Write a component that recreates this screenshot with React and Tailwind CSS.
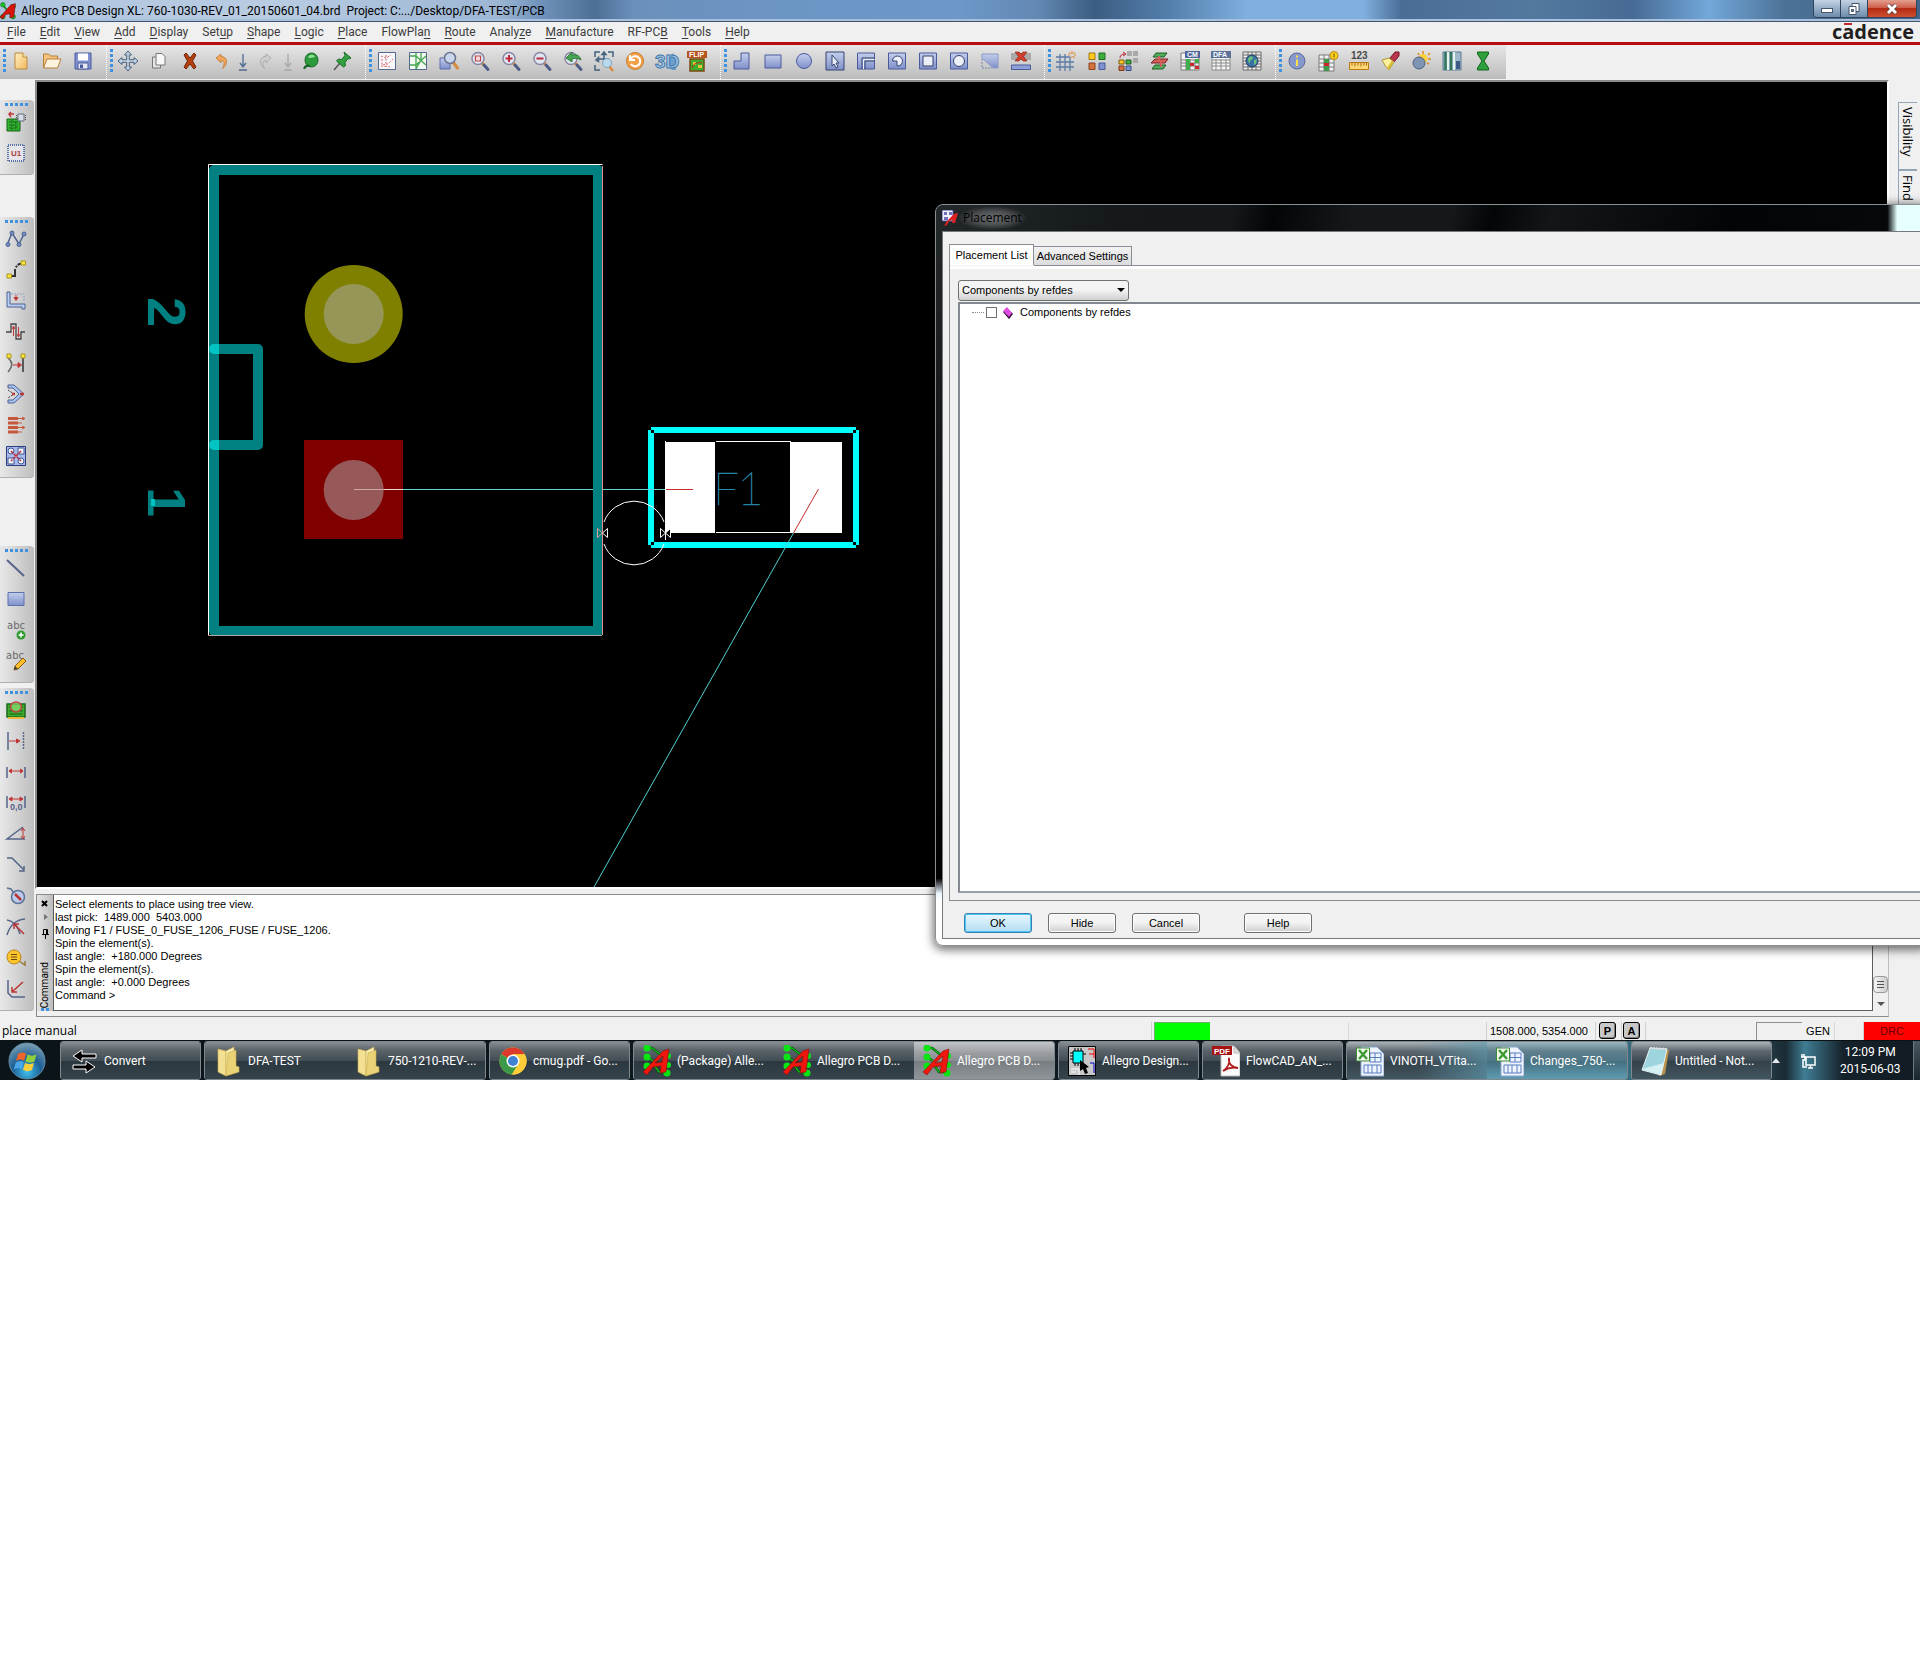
const magnifier = (inner) => (
  <>
    <path d="M12 12l2.5 2.5" stroke="#d98a3c" strokeWidth="3" />
    <path d="M14 14l4 4.5" stroke="#4d5c86" strokeWidth="3" strokeLinecap="round" />
    <circle cx="8" cy="7.5" r="6" fill="#dfe7f3" stroke="#8b86a0" strokeWidth="1.5" />
    {inner}
  </>
);

const ICONS = {
  newFile: (
    <>
      <path d="M4 2h8l4 4v12H4z" fill="url(#gold)" stroke="#b98a3c" />
      <path d="M12 2v4h4" fill="#fff3c9" stroke="#b98a3c" />
    </>
  ),
  open: (
    <>
      <path d="M1.5 16V3h5l2 2h7v4" fill="#f3c47c" stroke="#b9803c" />
      <path d="M1.5 17L5 8h14l-3.5 9z" fill="#fdf3df" stroke="#b9803c" />
    </>
  ),
  save: (
    <>
      <path d="M2 2h16v16H2z" fill="#7f8fcf" stroke="#4a5a9c" />
      <path d="M5 2.5h10v7H5z" fill="#fff" />
      <path d="M5 12h10v6H5z" fill="#e6e9f2" stroke="#4a5a9c" />
      <path d="M7 13.5h3V17H7z" fill="#4a5a9c" />
    </>
  ),
  move: (
    <path
      d="M10 0l3.5 4h-2.2v4.7H16V6.5l4 3.5-4 3.5v-2.2h-4.7V16h2.2L10 20l-3.5-4h2.2v-4.7H4v2.2L0 10l4-3.500v2.200h4.700V4H6.500z"
      fill="#c3d2e0"
      stroke="#46617f"
    />
  ),
  copy: (
    <>
      <path d="M3.5 6h8v11h-8z" fill="#e4e4e4" stroke="#777" />
      <path d="M7 2.5h6l3 3V14H7z" fill="#f7f7f7" stroke="#777" />
    </>
  ),
  remove: (
    <path
      d="M4 4l2-2 4 5 4-5 2 2-3.5 6 3.5 6-2 2-4-5-4 5-2-2 3.5-6z"
      fill="#b5400f"
      stroke="#6e2206"
    />
  ),
  undo: (
    <path d="M5 7l5-4v2.5c7 0 7 8.500 1.500 12 2.500-5 2-8-1.500-8V12z" fill="#f0a45c" stroke="#c07830" strokeWidth=".8" />
  ),
  redo: (
    <path d="M15 7l-5-4v2.5c-7 0-7 8.500-1.500 12-2.500-5-2-8 1.500-8V12z" fill="#cfcfcf" stroke="#a3a3a3" strokeWidth=".8" />
  ),
  globe: (
    <>
      <ellipse cx="10.5" cy="9" rx="6.5" ry="7" fill="#2f9a3d" stroke="#176a25" />
      <path d="M7 6c2-3 6-3 7 0-3 0-5 2-7 0z" fill="#93e09a" />
      <path d="M3 18c1-3 3-4 6-3" fill="none" stroke="#176a25" strokeWidth="2" />
    </>
  ),
  pin: (
    <>
      <path d="M8 12l-6 7" stroke="#555" strokeWidth="1.5" />
      <path d="M12 1l7 6-2 1-1-.5-3 4 .5 3-2 1.5-7-6 2-2 3 .5 3.500-4z" fill="#35a040" stroke="#186c26" />
    </>
  ),
  ratsRed: (
    <>
      <path d="M1.5 1.5h17v17h-17z" fill="#f7f7fb" stroke="#55688f" />
      <path d="M4 5l5 2 5-3M5 8v6l6-1 5-5M9 4v12M4 15l10 1" fill="none" stroke="#d46a6a" strokeDasharray="2 1.5" />
    </>
  ),
  ratsGreen: (
    <>
      <path d="M1.5 1.5h17v17h-17z" fill="#f2faf2" stroke="#55688f" />
      <path d="M2 5h6l10 9M2 14h6l10-9M8 2v16M13 2v7l-5 9" fill="none" stroke="#47a552" strokeWidth="1.3" />
    </>
  ),
  zoomArea: (
    <>
      <path d="M1 7h10v11H1z" fill="url(#steel)" stroke="#5c6fae" />
      <path d="M14 11l4.5 6" stroke="#d98a3c" strokeWidth="3" strokeLinecap="round" />
      <circle cx="11" cy="7" r="5.5" fill="#c9d6ec" stroke="#6c7391" strokeWidth="1.5" />
    </>
  ),
  zoomBox: magnifier(<path d="M5.5 5h5v5h-5z" fill="#f6dede" stroke="#c04646" strokeWidth="1.2" />),
  zoomIn: magnifier(<path d="M8 4v7M4.5 7.5h7" stroke="#c0283c" strokeWidth="2" />),
  zoomOut: magnifier(<path d="M4.5 7.5h7" stroke="#c0283c" strokeWidth="2" />),
  zoomPrev: magnifier(
    <path d="M3 7l6-6v3c5-1 8 1 9 5-3-2-6-2-9-1v3z" fill="#47a552" stroke="#1c6c28" strokeWidth=".8" />
  ),
  zoomFit: (
    <>
      <path
        d="M1 6V1h5M14 1h5v5M1 14v5h5M10 3v10M5 8h10M10 1l-2 2.5h4zM2 9l2.5-2.5v4z"
        fill="none"
        stroke="#41617f"
        strokeWidth="1.5"
      />
      <path d="M15 15l4 5" stroke="#d98a3c" strokeWidth="2.5" />
      <circle cx="13" cy="12" r="4.5" fill="#b9d9ee" stroke="#7fa3bd" />
    </>
  ),
  refresh: (
    <>
      <circle cx="10" cy="10" r="8.5" fill="#f4a24a" stroke="#c77a26" />
      <path d="M6 7.5A5 5 0 1 1 6 13M5 4v5h5" fill="none" stroke="#fff" strokeWidth="2" />
    </>
  ),
  threeD: (
    <>
      <path d="M10 14l6 5h4V6l-3-4z" fill="#6d9fcb" />
      <text x="-1" y="17" fontSize="19" fontWeight="700" fill="#a5c8e6" stroke="#3f76a8" strokeWidth="1" fontFamily="Liberation Sans">
        3D
      </text>
    </>
  ),
  flip: (
    <>
      <path d="M3 8h14v12H3z" fill="#3fae2c" stroke="#7a4a10" strokeWidth="1.5" />
      <path d="M6 11h3v3H6zM11 14h4v3h-4z" fill="#e6c23a" />
      <path d="M5 17c2-5 6-6 10-5" stroke="#b02a1a" fill="none" />
      <path d="M0 0h20v7H0z" fill="#b5541c" />
      <text x="2" y="6" fontSize="7" fontWeight="700" fill="#fff" fontFamily="Liberation Sans">
        FLIP
      </text>
    </>
  ),
  polygon: <path d="M2 10h7V2h8v16H2z" fill="url(#steel)" stroke="#4a5a9c" />,
  rect: <path d="M2 4h16v13H2z" fill="url(#steel)" stroke="#4a5a9c" />,
  circle: <circle cx="10" cy="10" r="7.5" fill="url(#steel)" stroke="#4a5a9c" />,
  select: (
    <>
      <path d="M1 1h18v18H1z" fill="url(#steel)" stroke="#33446f" />
      <path d="M7 4l7 8h-3l2 4-2 1-2-4-2 2z" fill="#e9edf8" stroke="#33446f" />
    </>
  ),
  shapeL: (
    <>
      <path d="M1.5 2h17v16h-17z" fill="url(#steel)" stroke="#4a5a9c" />
      <path d="M6 18V7h12.5M9 18v-8h9.5" fill="none" stroke="#33446f" />
      <path d="M7.5 18V8.5h11" fill="none" stroke="#eef1fa" />
    </>
  ),
  shapeCut: (
    <>
      <path d="M1.5 2h17v16h-17z" fill="url(#steel)" stroke="#4a5a9c" />
      <path d="M10 15V10H5.5A5 5 0 1 1 10 15z" fill="#eef1fa" stroke="#33446f" />
    </>
  ),
  shapeSquare: (
    <>
      <path d="M1.5 2h17v16h-17z" fill="url(#steel)" stroke="#4a5a9c" />
      <path d="M5 5h10v10H5z" fill="#eceff5" stroke="#33446f" />
    </>
  ),
  shapeRound: (
    <>
      <path d="M1.5 2h17v16h-17z" fill="url(#steel)" stroke="#4a5a9c" />
      <circle cx="10" cy="10" r="5.5" fill="#eceff5" stroke="#33446f" />
    </>
  ),
  shapeCorner: (
    <>
      <path d="M2 3h16v14h-5L2 7z" fill="url(#steel)" stroke="#8c9ac6" />
      <path d="M2 8v9h10" fill="none" stroke="#7583ad" strokeDasharray="2 1" />
    </>
  ),
  islandDelete: (
    <>
      <path d="M0 2h20v7H0z" fill="#a9a9a9" />
      <path d="M4 1h4l2 2 2-2h4l-3.5 4.5L16 10h-4l-2-2-2 2H4l3.5-4.5z" fill="#d0402c" stroke="#8a1e10" strokeWidth=".6" />
      <path d="M.5 14h19v4.5H.5z" fill="#8f9fd8" stroke="#4a5a9c" />
    </>
  ),
  grid: (
    <>
      <path d="M4 3v17M9 3v17M14 6v14M0 6h14M0 11h18M0 16h18" stroke="#5d7ba6" strokeWidth="1.3" />
      <path d="M16 0v3M16 5v2M12 4h2M18 4h2M13 1l2 2M19 1l-2 2M19 7l-2-2" stroke="#d9862a" />
    </>
  ),
  swatches: (
    <>
      <path d="M2 2h6v6.5H2z" fill="#ffc81e" stroke="#a07a10" />
      <path d="M12 2h6v6.5h-6z" fill="#3fae3c" stroke="#1f6e22" />
      <path d="M2 12h6v6.5H2z" fill="#d4713c" stroke="#8a4420" />
      <path d="M12 12h6v6.5h-6z" fill="#7f92cf" stroke="#475a96" />
    </>
  ),
  swatchMove: (
    <>
      <path d="M9 0h5v5H9zM15 0h5v5h-5zM15 7h5v5h-5z" fill="#a9a9a9" />
      <path d="M1 9h5v4H1z" fill="#ffc81e" stroke="#7a5a10" />
      <path d="M8 9h5v4H8z" fill="#3fae3c" stroke="#1f5e22" />
      <path d="M1 15h5v4.5H1z" fill="#d4713c" stroke="#7a3a20" />
      <path d="M8 15h5v4.5H8z" fill="#7f92cf" stroke="#374a86" />
      <path d="M2 7c0-3 2-4 5-4M5 1l3 2-3 2" fill="none" stroke="#c0283c" />
    </>
  ),
  layers: (
    <>
      <path d="M6 14h11l-3 4H3z" fill="#4fae5c" stroke="#1f5e22" />
      <path d="M6 8h13l-3 4H2z" fill="#d4605c" stroke="#7a1f22" />
      <path d="M7 2h11l-3 4H4z" fill="#4fae5c" stroke="#1f5e22" />
      <path d="M10 5v4M12 11v5" stroke="#d4605c" strokeWidth="2" />
    </>
  ),
  cm: (
    <>
      <path d="M1 2h18v17H1z" fill="#f2f2f2" stroke="#7a7a7a" />
      <path d="M1 9h18M1 12h18M1 15h18M6 8v11M10 8v11M15 8v11" stroke="#7a7a7a" />
      <path d="M6 8h4v11H6zM15 8h4v4h-4z" fill="#3fae4c" />
      <path d="M10 12h4v3h-4zM15 15h4v3h-4z" fill="#c8282c" />
      <path d="M5 0h15v7H5z" fill="#4f679c" />
      <text x="7" y="6" fontSize="7" fontWeight="700" fill="#fff" fontFamily="Liberation Sans">
        CM
      </text>
    </>
  ),
  dfa: (
    <>
      <path d="M1 2h18v17H1z" fill="#f4f4f4" stroke="#8a8a8a" />
      <path d="M1 9h18M1 12h18M1 15h18M5 8v11M10 8v11M15 8v11" stroke="#8a8a8a" />
      <path d="M0 0h20v7H0z" fill="#5c7199" />
      <text x="2" y="6" fontSize="7" fontWeight="700" fill="#fff" fontFamily="Liberation Sans">
        DFA
      </text>
    </>
  ),
  sheetGlobe: (
    <>
      <path d="M1 1h18v18H1z" fill="#ececec" stroke="#6a6a6a" />
      <path d="M1 4h18M1 7h18M1 10h18M1 13h18M1 16h18M6 1v18M10 1v18M14 1v18" stroke="#6a6a6a" />
      <circle cx="10" cy="10" r="6" fill="#3c6fa6" stroke="#1d3d66" />
      <path d="M6 8c2-4 5-3 5-1s-3 1-3 4-2 0-2-3zM12 9l3-1-1 5-2 1z" fill="#67c27a" />
    </>
  ),
  info: (
    <>
      <circle cx="10" cy="10" r="8" fill="#8798cc" stroke="#5a6a9a" />
      <path d="M10 8.5V15M10 4.5v2" stroke="#ffe24a" strokeWidth="2" />
    </>
  ),
  sheetInfo: (
    <>
      <path d="M1 4h15v16H1z" fill="#f2f2f2" stroke="#7a7a7a" />
      <path d="M1 8h15M1 12h15M1 16h15M6 4v16M11 4v16" stroke="#7a7a7a" />
      <path d="M6 8h5v12H6z" fill="#3f9a4c" />
      <path d="M6 12h5v3H6z" fill="#c8282c" />
      <circle cx="16" cy="4.5" r="4" fill="#ffd21e" stroke="#b98a10" />
      <path d="M16 2.5v4" stroke="#6a4a00" />
    </>
  ),
  ruler: (
    <>
      <text x="2" y="8" fontSize="10" fontWeight="700" fill="#4a4a4a" fontFamily="Liberation Sans">
        123
      </text>
      <path d="M.5 11.5h19v7H.5z" fill="#ffd676" stroke="#b97a10" />
      <path d="M3 11.5v3M6 11.5v4M9 11.5v3M12 11.5v4M15 11.5v3M17.5 11.5v3" stroke="#a8680c" />
    </>
  ),
  brush: (
    <>
      <path d="M10 7l5-6 4 0v4l-5 6z" fill="#b8344c" stroke="#7a1a2c" />
      <path d="M2 9l7-2 5 4-5 8-3-3z" fill="#fff09c" stroke="#a8983c" />
      <path d="M9 19l5-8-2-1.5L7 17z" fill="#d6b83c" />
    </>
  ),
  shadow: (
    <>
      <path d="M12 0v3M19 2l-2 2M20 8h-3M18 13l-2-1M7 2l1 2" stroke="#e08a1a" strokeWidth="1.5" />
      <circle cx="12" cy="7.5" r="4.5" fill="#ffd03c" />
      <circle cx="8" cy="12" r="6" fill="#7f93b3" stroke="#4c5f80" />
    </>
  ),
  bars: (
    <>
      <path d="M1 1h18v18H1z" fill="#9fb8cc" stroke="#5a7a94" />
      <path d="M3.5 1v18M9 1v18" stroke="#35775c" strokeWidth="2.5" />
      <path d="M6 1v18M12 1v18" stroke="#e6f4ee" strokeWidth="2" />
      <path d="M14 10h4v8h-4z" fill="#3d5a85" />
    </>
  ),
  hourglass: <path d="M4.5 1h11v2L11 10l4.5 7v2h-11v-2L9 10 4.5 3z" fill="#2fa03c" stroke="#12641d" />,
  place: (
    <>
      <path d="M1 7h13v12H1z" fill="#35b52f" stroke="#14651a" />
      <path d="M3 10h9M3 13h9M3 16h9M6 8v10M10 9v9" stroke="#14651a" strokeDasharray="3 1" />
      <path d="M8 2H3M5 0L3 2l2 3" fill="none" stroke="#c03838" strokeWidth="1.5" />
      <path d="M12 2h6v7h-6z" fill="#d8dee8" stroke="#636f80" />
      <path d="M10.5 3v5M19.5 3v5" stroke="#555" strokeDasharray="1 1" />
    </>
  ),
  u1: (
    <>
      <path d="M2 2h16v16H2z" fill="#e6e6ea" stroke="#5a73a6" strokeWidth="2" strokeDasharray="1 1" />
      <text x="5" y="13" fontSize="8" fontWeight="700" fill="#a83a3a" fontFamily="Liberation Sans">
        U1
      </text>
    </>
  ),
  route: (
    <>
      <path d="M1.5 15L6 4l7 11 5-10" fill="none" stroke="#4d6391" strokeWidth="1.5" />
      <g fill="#7590c8" stroke="#4d6391">
        <circle cx="2" cy="15.5" r="2" />
        <circle cx="6" cy="4" r="2" />
        <circle cx="13" cy="15.5" r="2" />
        <circle cx="18" cy="5" r="2" />
      </g>
    </>
  ),
  elbow: (
    <>
      <path d="M4 16h5V8l4-4h4" fill="none" stroke="#333" strokeWidth="2" strokeDasharray="12 2 2 1" />
      <path d="M1 14h4.5v4H1zM15 1h4.5v4H15z" fill="#ffe63c" stroke="#a8941c" />
    </>
  ),
  slide: (
    <>
      <path d="M1 1h3v12h15v5h-3v-2H1z" fill="#b9cdf0" stroke="#4d6391" />
      <path d="M5 3h13v8" fill="none" stroke="#8fa3c8" strokeDasharray="2 1" />
      <path d="M10 4v4M8 6.5l2 3 2-3z" fill="#c03838" stroke="#c03838" />
    </>
  ),
  delay: (
    <>
      <path d="M0 10h5V2h5v15h5v-7h4" fill="none" stroke="#444" strokeWidth="1.3" />
      <path d="M7.5 14V5M6 7l1.5-3L9 7M12.5 5v9M11 12l1.5 3 1.5-3" fill="none" stroke="#c03838" />
    </>
  ),
  spread: (
    <>
      <path d="M2 5c5 4 5 8 0 14" fill="none" stroke="#666" strokeWidth="1.5" />
      <path d="M17 5v14" stroke="#333" strokeWidth="1.5" />
      <path d="M7 12h7M12 9.5l3.5 2.5-3.5 2.5z" fill="#c03838" stroke="#c03838" />
      <path d="M1 1h4v4H1zM15 1h4v4h-4z" fill="#ffe63c" stroke="#a8941c" />
    </>
  ),
  miter: (
    <>
      <path d="M2 1h6l10 9-10 9H2v-3h5l6-6-6-6H2z" fill="#a9c1ee" stroke="#4d6391" />
      <path d="M2 6l6 4-6 4" fill="none" stroke="#444" strokeDasharray="2 1" />
      <path d="M6 10h3M14 10h4" stroke="#c03838" strokeWidth="2.5" />
    </>
  ),
  fanout: (
    <>
      <path d="M2 2h10v3H2zM2 6.5h10v3H2zM2 11h10v3H2zM2 15.5h10v3H2z" fill="#c5583c" />
      <path d="M12 3.5h6M12 8h4M12 12.5h6M12 17h4M16 2l3 1.5L16 5M16 11l3 1.5-3 1.5" fill="none" stroke="#c5583c" />
    </>
  ),
  autoRoute: (
    <>
      <path d="M.5.5h19v19H.5z" fill="#a9bbea" stroke="#2d3f80" />
      <g fill="#f4f6fc" stroke="#3f5493">
        <circle cx="5" cy="5" r="3" />
        <circle cx="15" cy="15" r="3" />
        <path d="M12 2h6v6h-6zM2 12h6v6H2z" />
      </g>
      <path d="M5 5l10 10M15 5L5 15" stroke="#b82c3c" strokeWidth="1.5" strokeDasharray="3 1" />
    </>
  ),
  line: <path d="M1 2l17 16" stroke="#566589" strokeWidth="2" />,
  box: <path d="M2 3.5h16v13H2z" fill="url(#steel)" stroke="#5c6fae" />,
  textAdd: (
    <>
      <text x="1" y="9" fontSize="10" fill="#6a6a6a" fontFamily="DejaVu Sans">
        abc
      </text>
      <circle cx="15" cy="15" r="4.5" fill="#2f9a30" />
      <path d="M15 12.5v5M12.5 15h5" stroke="#fff" strokeWidth="1.5" />
    </>
  ),
  textEdit: (
    <>
      <text x="0" y="8" fontSize="10" fill="#6a6a6a" fontFamily="DejaVu Sans">
        abc
      </text>
      <path d="M8 19l1-4 8-8 3 3-8 8z" fill="#ffbe2c" stroke="#8a5a10" />
      <path d="M8 19l1-4 3 3z" fill="#444" />
    </>
  ),
  board: (
    <>
      <path d="M1 4h18v13H1z" fill="#3fae30" stroke="#1a6a1c" strokeWidth="1.5" />
      <path d="M3 7h3M3 11h14M3 14h14M14 7h3" stroke="#15651a" />
      <path d="M2 18h16" stroke="#e6b93a" strokeWidth="2" />
      <ellipse cx="10" cy="7" rx="5.5" ry="5" fill="#9be07a" fillOpacity=".6" stroke="#c04040" strokeWidth="1.5" />
    </>
  ),
  dimLinear: (
    <>
      <path d="M2 1v18" stroke="#566589" strokeWidth="1.5" />
      <path d="M17.5 1v18" stroke="#566589" strokeWidth="1.5" strokeDasharray="2 1" />
      <path d="M3 10h10M10.5 8l3.5 2-3.5 2z" fill="#c03838" stroke="#c03838" />
    </>
  ),
  dimSpan: (
    <>
      <path d="M1 5v11M19 5v11" stroke="#566589" strokeWidth="1.5" />
      <path d="M3 9h14M5.5 7L3 9l2.5 2zM14.500 7L17 9l-2.500 2z" fill="#c03838" stroke="#c03838" />
    </>
  ),
  dimDatum: (
    <>
      <path d="M1 3v12M19 3v12" stroke="#566589" strokeWidth="1.5" />
      <path d="M3 6h14M6 4L3 6l3 2zM14 4l3 2-3 2z" fill="#c03838" stroke="#c03838" />
      <text x="4" y="17" fontSize="9" fontWeight="700" fill="#566589" fontFamily="Liberation Sans">
        0,0
      </text>
    </>
  ),
  angle: (
    <>
      <path d="M19 15H1L17 3" fill="none" stroke="#566589" strokeWidth="1.5" />
      <path d="M17 5v9M15 7l2-3 2 3M15 12l2 3 2-3" fill="none" stroke="#c03838" />
    </>
  ),
  leader: <path d="M1 3h5l12 12M18 11v5h-5" fill="none" stroke="#566589" strokeWidth="1.5" />,
  diameter: (
    <>
      <circle cx="12" cy="11" r="6.5" fill="#bccbea" stroke="#5c7199" strokeWidth="1.5" />
      <path d="M1 2l4 1 3 4" fill="none" stroke="#5c7199" strokeWidth="1.5" />
      <path d="M9 8l6 6" stroke="#b83434" strokeWidth="2.5" />
    </>
  ),
  radius: (
    <>
      <path d="M1 3c7 1 11 7 13 14M1 18C4 8 9 3 19 2" fill="none" stroke="#566589" strokeWidth="1.5" />
      <path d="M18 17L9 8M8 12V7h5" fill="none" stroke="#b83434" strokeWidth="1.5" />
    </>
  ),
  balloon: (
    <>
      <path d="M13 13l6 4v-4" fill="none" stroke="#9a7a3c" strokeWidth="1.5" />
      <circle cx="8" cy="9" r="7" fill="#ffc62c" stroke="#b9831c" />
      <path d="M5 6.5h6M5 9h6M5 11.5h6" stroke="#6a4a10" />
    </>
  ),
  chamfer: (
    <>
      <path d="M2 1v13l4 4h13" fill="none" stroke="#566589" strokeWidth="1.5" />
      <path d="M17 3L7 12M6 8v5h5" fill="none" stroke="#b83434" strokeWidth="1.5" />
    </>
  ),
};

const TOP_TOOLS = [
  ["newFile", "open", "save"],
  ["move", "copy", "remove", "undo", "undoMark", "redo", "redoMark", "globe", "pin"],
  ["ratsRed", "ratsGreen", "zoomArea", "zoomBox", "zoomIn", "zoomOut", "zoomPrev", "zoomFit", "refresh", "threeD", "flip"],
  ["polygon", "rect", "circle", "select", "shapeL", "shapeCut", "shapeSquare", "shapeRound", "shapeCorner", "islandDelete"],
  ["grid", "swatches", "swatchMove", "layers", "cm", "dfa", "sheetGlobe"],
  ["info", "sheetInfo", "ruler", "brush", "shadow", "bars", "hourglass"],
];

const SIDE_TOOLS = [
  { gap: "mt-0", tools: ["place", "u1"] },
  { gap: "mt-[42px]", tools: ["route", "elbow", "slide", "delay", "spread", "miter", "fanout", "autoRoute"] },
  { gap: "mt-[68px]", tools: ["line", "box", "textAdd", "textEdit"] },
  {
    gap: "mt-[5px]",
    tools: ["board", "dimLinear", "dimSpan", "dimDatum", "angle", "leader", "diameter", "radius", "balloon", "chamfer"],
  },
];

// [text before the mnemonic, mnemonic, text after it]
const MENUS = [
  ["", "F", "ile"],
  ["", "E", "dit"],
  ["", "V", "iew"],
  ["", "A", "dd"],
  ["", "D", "isplay"],
  ["Set", "u", "p"],
  ["", "S", "hape"],
  ["", "L", "ogic"],
  ["", "P", "lace"],
  ["FlowPla", "n", ""],
  ["", "R", "oute"],
  ["Analy", "z", "e"],
  ["", "M", "anufacture"],
  ["RF-PC", "B", ""],
  ["", "T", "ools"],
  ["", "H", "elp"],
];

const LOG = [
  "Select elements to place using tree view.",
  "last pick:  1489.000  5403.000",
  "Moving F1 / FUSE_0_FUSE_1206_FUSE / FUSE_1206.",
  "Spin the element(s).",
  "last angle:  +180.000 Degrees",
  "Spin the element(s).",
  "last angle:  +0.000 Degrees",
  "Command >",
];

function Icon({ name }) {
  return (
    <svg viewBox="0 0 20 20" className="size-5 overflow-visible" aria-hidden="true">
      {ICONS[name]}
    </svg>
  );
}

function ToolButton({ name }) {
  if (name === "undoMark" || name === "redoMark") {
    const color = name === "undoMark" ? "#4f6a94" : "#a8a8a8";
    return (
      <button type="button" aria-label={name} className="flex h-[27px] w-[10px] items-center justify-center">
        <svg viewBox="0 0 10 20" className="h-5 w-[10px]" aria-hidden="true">
          <path d="M5 3v12M2 12l3 4 3-4M1 19h8" fill="none" stroke={color} strokeWidth="1.3" />
        </svg>
      </button>
    );
  }
  return (
    <button type="button" aria-label={name} className="flex size-[27px] items-center justify-center">
      <Icon name={name} />
    </button>
  );
}

function Logo() {
  return (
    <svg viewBox="0 0 28 32" className="h-8 w-7" aria-hidden="true">
      <path d="M4 3h5l9 7h7M4 12l6 4M3 21l8-1 5 7h8M14 20h11" fill="none" stroke="#0a5c10" strokeWidth="2.5" />
      <path d="M4 3h5l9 7h7M4 12l6 4M3 21l8-1 5 7h8M14 20h11" fill="none" stroke="#0be414" />
      <g fill="#0be414">
        <circle cx="4" cy="3" r="3.5" />
        <circle cx="4" cy="12" r="3.5" />
        <circle cx="4" cy="21" r="3.5" />
        <circle cx="25" cy="11" r="3" />
        <circle cx="25" cy="20" r="3" />
        <circle cx="24" cy="28" r="3.5" />
      </g>
      <path d="M0 27L20 6l6-2-3 23-6 1 1-7-8 1-6 8z M12 18l7-1 1-6z" fill="#f0180e" fillRule="evenodd" stroke="#7a0a06" strokeWidth=".5" />
    </svg>
  );
}

function TitleBar() {
  return (
    <header className="flex h-[22px] items-start border-b border-[#41546e] bg-[linear-gradient(to_right,#aec4de_0%,#b9cce2_14%,#9cb6d4_26%,#7395bd_28%,#4d6f95_31%,#6b90bb_33%,#6c95c4_40%,#6c97c8_50%,#6389b3_54%,#3c5d82_57%,#5480ad_61%,#7fb0df_65%,#7fb0df_71%,#4a6d96_73%,#54799f_80%,#466a93_85%,#72a8da_89%,#4c7196_93%,#41648a_100%)] shadow-[inset_0_-2px_0_#a9c0dc]">
      <svg viewBox="0 0 28 32" className="mt-[2px] h-[18px] w-4" preserveAspectRatio="none" aria-hidden="true">
        <path d="M4 4l16 20M4 24L24 6" stroke="#0d8a10" strokeWidth="3" />
        <g fill="#1fc427" stroke="#06600a">
          <circle cx="5" cy="5" r="4" />
          <circle cx="23" cy="8" r="4" />
          <circle cx="5" cy="26" r="4" />
          <circle cx="23" cy="26" r="4" />
        </g>
        <path d="M0 27L19 5l8-2-3 24-7 1 1-7-8 1-5 8z" fill="#d8150c" stroke="#6a0a06" />
      </svg>
      <h1 className="ml-[5px] whitespace-pre font-['Roboto',sans-serif] text-xs leading-[22px] text-black">
        Allegro PCB Design XL: 760-1030-REV_01_20150601_04.brd  Project: C:.../Desktop/DFA-TEST/PCB
      </h1>
      <div className="mr-[3px] ml-auto flex h-[18px] overflow-hidden rounded-b border border-t-0 border-[#31445c]">
        <button type="button" aria-label="Minimize" className="flex w-[27px] items-end justify-center border-r border-[#31445c] bg-linear-to-b from-[#c3d3e4] to-[#6e8bab] pb-1">
          <span className="h-[5px] w-3 border border-[#44546a] bg-white" />
        </button>
        <button type="button" aria-label="Restore" className="flex w-[27px] items-center justify-center border-r border-[#31445c] bg-linear-to-b from-[#c3d3e4] to-[#6e8bab]">
          <svg viewBox="0 0 14 14" className="size-[14px]" aria-hidden="true">
            <path d="M5 1.5h7v8H5z" fill="#fff" stroke="#44546a" />
            <path d="M2 4.5h7v8H2z" fill="#fff" stroke="#44546a" />
            <path d="M4.5 7.5h2v2h-2z" fill="#6e8bab" stroke="#44546a" />
          </svg>
        </button>
        <button type="button" aria-label="Close" className="flex w-[48px] items-center justify-center bg-[linear-gradient(#e3a08f,#cf5f49_45%,#b52a12_50%,#cf5030)]">
          <svg viewBox="0 0 14 12" className="h-3 w-[14px]" aria-hidden="true">
            <path d="M3 2l8 8M11 2l-8 8" stroke="#4d3a3a" strokeWidth="4.5" />
            <path d="M3 2l8 8M11 2l-8 8" stroke="#fff" strokeWidth="3" />
          </svg>
        </button>
      </div>
    </header>
  );
}

function MenuBar() {
  return (
    <nav className="flex h-5 items-center font-['Roboto',sans-serif] text-xs text-[#3c3c3c]">
      {MENUS.map(([before, key, after]) => (
        <button key={before + key + after} type="button" className="px-[7px] leading-5">
          {before}
          <span className="underline underline-offset-2">{key}</span>
          {after}
        </button>
      ))}
      <div className="relative mr-[6px] ml-auto font-['Open_Sans',sans-serif] text-xl leading-5 font-bold text-[#231f20]">
        cadence
        <span className="absolute top-px left-3 h-[2px] w-2 bg-[#c0282c]" />
      </div>
    </nav>
  );
}

function TopToolbar() {
  return (
    <div className="mb-px flex h-[34px] w-fit bg-linear-to-b from-[#e6e6e6] to-[#bcbcbc]" role="toolbar">
      {TOP_TOOLS.map((group, i) => (
        <div
          key={group[0]}
          className={`flex items-center pr-[10px] pb-[2px] pl-[3px] ${
            i < TOP_TOOLS.length - 1 ? "border-r border-dotted border-white" : ""
          }`}
        >
          <span className="mr-px h-6 w-[3px] bg-[repeating-linear-gradient(#3f92e2_0_3px,transparent_3px_5px)]" />
          <div className="flex gap-1">
            {group.map((name) => (
              <ToolButton key={name} name={name} />
            ))}
          </div>
        </div>
      ))}
    </div>
  );
}

function SideToolbars() {
  return (
    <aside className="w-[35px] shrink-0 pt-5">
      {SIDE_TOOLS.map(({ gap, tools }) => (
        <div
          key={tools[0]}
          className={`${gap} w-[34px] rounded-r-sm bg-linear-to-r from-[#e8e8e8] to-[#bebebe] pt-[3px] pb-[9px] shadow-[inset_0_-1px_0_#b0b0b0]`}
        >
          <span className="mb-[2px] ml-[5px] block h-[3px] w-[23px] bg-[repeating-linear-gradient(to_right,#3f92e2_0_3px,transparent_3px_5px)]" />
          <div className="flex flex-col gap-1 pl-[2px]">
            {tools.map((name) => (
              <ToolButton key={name} name={name} />
            ))}
          </div>
        </div>
      ))}
    </aside>
  );
}

function Board() {
  return (
    <svg viewBox="37 82 1850 805" preserveAspectRatio="xMinYMin slice" className="block h-[805px] w-full bg-black">
      <g fill="none" stroke="#008080" strokeWidth="10" strokeLinejoin="round" strokeLinecap="round">
        <path d="M214 170H598V631H214z" />
        <path d="M214 349H258V445H214" />
      </g>
      <g fill="#00c4c4">
        <path d="M219 344h-5a5 5 0 0 0 0 10h5zM219 440h-5a5 5 0 0 0 0 10h5z" />
      </g>
      <path d="M602.5 164.5H208.5V635.5" fill="none" stroke="#fff" />
      <path d="M602.5 166V635" stroke="#d9938a" />
      <path d="M209 635.5H602" stroke="#b4a8a4" />

      <g fontFamily="Liberation Sans" fontWeight="700" fontSize="54" fill="#008080">
        <text transform="translate(148 297) rotate(90)">2</text>
        <text transform="translate(148 487) rotate(90)">1</text>
      </g>
      <path d="M151 499h4v7h-4z" fill="#00c4c4" />

      <circle cx="353.7" cy="314" r="49" fill="#808000" />
      <circle cx="353.7" cy="314" r="30" fill="#969658" />
      <path d="M304 440h99v99h-99z" fill="#800000" />
      <circle cx="353.7" cy="490" r="30" fill="#965858" />

      <g fill="#0ff">
        <path d="M651 427h205v6H651zM651 542h205v6H651zM648 430h6v115h-6zM853 430h6v115h-6z" />
      </g>
      <path d="M651 430h3v3h-3zM853 430h3v3h-3zM651 542h3v3h-3zM853 542h3v3h-3z" fill="#000" />
      <path d="M666 442h49v91h-49zM790 442h52v91h-52z" fill="#fff" />
      <path d="M665.5 441V540M716 441.5h75M716 532.5h75" stroke="#fff" />
      <g fontFamily="Lato" fontWeight="100" fontSize="46" fill="#2b8cab" stroke="#2b8cab" strokeWidth=".4">
        <text x="713" y="505">
          F
        </text>
        <text x="737" y="505">
          1
        </text>
      </g>

      <path d="M354 489.5h30" stroke="#c9aaa6" />
      <path d="M384 489.5h19" stroke="#e8d8d4" />
      <path d="M403 489.5h190M603 489.5h62" stroke="#5fd6d4" />
      <path d="M666 489.5h27" stroke="#c42b2b" />
      <path d="M818.5 489L793.5 533" stroke="#c42b2b" />
      <path d="M793.5 533L594 887" stroke="#4fd0d0" />

      <g fill="none" stroke="#fff">
        <path d="M604 522a32 32 0 0 1 60 0M604 544a32 32 0 0 0 60 0" />
        <path d="M602.5 533l5-4.5v9z" />
        <path d="M602.5 533l-5-4.5v9z" stroke="#e09a90" />
        <path d="M665.5 533l5-4.5v9zM665.5 533l-5-4.5v9z" fill="#000" />
      </g>
    </svg>
  );
}

function CommandPanel() {
  return (
    <section className="mt-[5px] ml-px flex h-[123px] border border-[#8a8a8a] border-r-[#bdbdbd] pb-[5px]">
      <div className="flex w-4 shrink-0 flex-col items-center bg-linear-to-r from-[#e4e4e4] to-[#bdbdbd] pt-1">
        <svg viewBox="0 0 12 44" className="h-11 w-3" aria-hidden="true">
          <path d="M3 2l5 5M8 2L3 7" stroke="#000" strokeWidth="2" />
          <path d="M5 15l4 3-4 3z" fill="#777" />
          <path d="M3 35.5h7M4.5 35V30.5h4V35M6.5 36v4M7.5 31v4" fill="none" stroke="#000" />
        </svg>
        <span className="mt-auto rotate-180 font-['Roboto',sans-serif] text-[10px] leading-4 text-black [writing-mode:vertical-rl]">Command</span>
        <span className="h-[3px] w-2 bg-[repeating-linear-gradient(to_right,#3f92e2_0_3px,transparent_3px_5px)]" />
      </div>
      <div className="min-w-0 flex-1 border-r border-b border-l border-[#5c5c5c] bg-white pt-[3px] pl-px font-['Liberation_Sans',sans-serif] text-[11px] leading-[13px] text-black">
        {LOG.map((line, i) => (
          <p key={i} className="whitespace-pre">
            {line}
          </p>
        ))}
      </div>
      <div className="flex w-[15px] shrink-0 flex-col justify-end pb-1">
        <button type="button" aria-label="Scroll thumb" className="mb-2 flex h-[17px] w-[15px] flex-col items-center justify-center gap-[2px] rounded-sm border border-[#999] bg-linear-to-r from-[#f5f5f5] to-[#cfcfcf]">
          <span className="h-px w-[7px] bg-[#555]" />
          <span className="h-px w-[7px] bg-[#555]" />
          <span className="h-px w-[7px] bg-[#555]" />
        </button>
        <svg viewBox="0 0 15 6" className="h-[6px] w-[15px]" aria-hidden="true">
          <path d="M4 1h8l-4 4z" fill="#555" />
        </svg>
      </div>
    </section>
  );
}

function DockTabs() {
  return (
    <div className="w-[31px] shrink-0 pt-[22px] pl-[9px] text-[13px] text-black">
      {["Visibility", "Find"].map((tab) => (
        <button
          key={tab}
          type="button"
          className="block h-[68px] w-[19px] border-t border-b border-l border-[#93a5b8] pt-1 text-left leading-4 [writing-mode:vertical-rl]"
        >
          {tab}
        </button>
      ))}
    </div>
  );
}

function DialogButton({ children, primary, className = "" }) {
  return (
    <button
      type="button"
      className={`h-5 w-[68px] rounded-[3px] border text-[11px] leading-4 text-black ${
        primary
          ? "border-[#3c7fb1] bg-linear-to-b from-[#e8f6fd] to-[#b3ddf4] shadow-[inset_0_0_0_1px_#48c8f4]"
          : "border-[#707070] bg-linear-to-b from-[#f4f4f4] from-45% to-[#cfcfcf] shadow-[inset_0_0_0_1px_#fcfcfc]"
      } ${className}`}
    >
      {children}
    </button>
  );
}

function PlacementDialog() {
  return (
    <div
      role="dialog"
      aria-labelledby="placement-title"
      className="absolute top-[204px] right-[-8px] left-[935px] rounded-lg border border-[#8b8f92] bg-[linear-gradient(#23282a,#15181a_30%,#000_91%,#e9f4ff_93%,#fff_94%)] px-[6px] pb-[6px] font-['Liberation_Sans',sans-serif] text-[11px] text-black shadow-[0_2px_10px_2px_rgba(0,0,0,0.55)]"
    >
      <div className="-mx-[6px] flex h-[26px] items-center rounded-t-lg bg-[linear-gradient(to_right,transparent_96%,#e6ffff_97%),linear-gradient(105deg,#23282a_0%,#15191c_18%,#14181b_30%,#020607_34%,#14181b_42%,#15181b_52%,#030607_56%,#121619_62%,#020507_80%,#05090b_95%)] pl-[6px]">
        <svg viewBox="0 0 16 16" className="size-4" aria-hidden="true">
          <path d="M0 0h11v11H0z" fill="#f0f0ff" stroke="#4a4a9c" />
          <path d="M2 2h3v3H2zM7 2h3v3H7zM2 7h4v3H2z" fill="#7070c0" />
          <path d="M2 16l3-5 7-7 4-1-3 10-3 0 1-3-4 1-2 4z" fill="#e02020" />
        </svg>
        <h2
          id="placement-title"
          className="rounded-full bg-[radial-gradient(closest-side,#6e7173,#4a4d4f_60%,transparent)] px-[5px] font-['Open_Sans',sans-serif] text-xs leading-6"
        >
          Placement
        </h2>
      </div>
      <div className="border border-[#77797b] bg-[#f0f0f0] pt-3 pb-[5px] pl-[6px]">
        <div role="tablist" className="flex items-end">
          <button type="button" role="tab" aria-selected="true" className="h-[21px] w-[85px] border border-b-0 border-[#898c95] bg-white">
            Placement List
          </button>
          <button
            type="button"
            role="tab"
            aria-selected="false"
            className="h-[19px] w-[98px] border border-b-0 border-l-0 border-[#898c95] bg-linear-to-b from-[#f3f3f3] to-[#dcdcdc]"
          >
            Advanced Settings
          </button>
        </div>
        <div className="border-b border-l border-[#898c95] pb-[7px]">
          <div className="ml-[84px] h-px bg-[#898c95]" />
          <div className="h-[3px] bg-white" />
          <div className="relative mt-[11px] ml-2 w-[171px]">
            <label htmlFor="component-filter" className="sr-only">
              Filter
            </label>
            <select
              id="component-filter"
              className="block h-[21px] w-full appearance-none rounded-[3px] border border-[#707070] bg-linear-to-b from-[#f4f4f4] from-45% to-[#cfcfcf] py-0 pl-[3px] leading-[19px]"
            >
              <option>Components by refdes</option>
            </select>
            <svg viewBox="0 0 8 4" className="pointer-events-none absolute top-2 right-1 h-1 w-2" aria-hidden="true">
              <path d="M0 0h8l-4 4z" fill="#000" />
            </svg>
          </div>
          <div className="mt-px ml-2 h-[591px] border-2 border-r-0 border-[#828790] border-b-[#9a9ea5] bg-white pt-[2px] pl-3">
            <div className="flex h-[13px] items-center">
              <span className="w-3 border-t border-dotted border-[#888]" />
              <input id="refdes-node" type="checkbox" className="ml-[2px] size-[11px] appearance-none border border-[#707070] bg-white" />
              <svg viewBox="0 0 10 12" className="ml-[6px] h-3 w-[10px]" aria-hidden="true">
                <path d="M0 5l4-4 6 6-4 5z" fill="#2a062a" />
                <path d="M0 4l4-4 5 6-3 4z" fill="#e04be0" />
              </svg>
              <label htmlFor="refdes-node" className="ml-[7px]">
                Components by refdes
              </label>
            </div>
          </div>
        </div>
        <div className="flex gap-4 pt-3 pl-[15px]">
          <DialogButton primary>OK</DialogButton>
          <DialogButton>Hide</DialogButton>
          <DialogButton>Cancel</DialogButton>
          <DialogButton className="ml-7">Help</DialogButton>
        </div>
      </div>
    </div>
  );
}

function Keycap({ children }) {
  return (
    <span className="flex h-[17px] w-[17px] items-center justify-center rounded-[3px] border border-black bg-[#c8c8c8] font-['Liberation_Sans',sans-serif] text-[11px] font-bold shadow-[inset_-1px_-1px_0_#808080]">
      {children}
    </span>
  );
}

function StatusBar() {
  return (
    <footer className="flex h-[23px] items-stretch pt-[5px] text-xs leading-[18px] text-black">
      <div className="flex-1 pl-[2px] font-['Open_Sans',sans-serif]">place manual</div>
      <div className="w-[197px] border-l border-[#d0d0d0] pl-[2px]">
        <div className="h-[18px] w-14 bg-[#0f0] shadow-[inset_1px_1px_0_#6fae6f]" />
      </div>
      <div className="w-[138px] border-l border-[#d8d8d8]" />
      <div className="w-[109px] border-l border-[#d0d0d0] pl-[3px] font-['Liberation_Sans',sans-serif] text-[11px] whitespace-nowrap">
        1508.000, 5354.000
      </div>
      <div className="w-[26px] border-l border-[#d0d0d0] pl-[3px]">
        <Keycap>P</Keycap>
      </div>
      <div className="w-6 border-l border-[#d0d0d0] pl-px">
        <Keycap>A</Keycap>
      </div>
      <div className="w-[109px] border-l border-[#d0d0d0]" />
      <div className="ml-[2px] w-[46px] border-t border-l border-[#8f8f8f]" />
      <div className="w-8 text-center font-['Liberation_Sans',sans-serif] text-[11px]">GEN</div>
      <div className="w-[29px] border-l border-[#d8d8d8]" />
      <div className="w-[57px] border-l border-[#d0d0d0] bg-[#f00] text-center font-['Liberation_Sans',sans-serif] text-[11px] text-[#6a0000]">
        DRC
      </div>
    </footer>
  );
}

const TASK_ICONS = {
  convert: (
    <svg viewBox="0 0 28 32" className="h-8 w-7" aria-hidden="true">
      <path d="M3 11l9-6v4h14v4H12v4z" fill="#000" stroke="#fff" />
      <path d="M25 22l-9-6v4H3v4h13v4z" fill="#000" stroke="#fff" />
    </svg>
  ),
  folder: (
    <svg viewBox="0 0 28 32" className="h-8 w-7" aria-hidden="true">
      <path d="M4 4l8 2v25l-8-4z" fill="#f3e093" stroke="#c9ad4c" strokeWidth=".6" />
      <path d="M12 6l8-4v20l-8 9z" fill="#f9eeb4" stroke="#c9ad4c" strokeWidth=".6" />
      <path d="M14 8l8-3v16l3 1v5l-13 4z" fill="#ead276" stroke="#c9ad4c" strokeWidth=".6" />
    </svg>
  ),
  chrome: (
    <svg viewBox="0 0 28 28" className="size-7" aria-hidden="true">
      <circle cx="14" cy="14" r="13.5" fill="#ffcd3a" />
      <path d="M14 14L2.3 7.2A13.5 13.5 0 0 1 25.7 7.2H14z" fill="#dc3a2c" />
      <path d="M14 14L2.3 7.2A13.5 13.5 0 0 0 13 27.5l6-10z" fill="#3a9a48" />
      <path d="M14 7.2h11.7a13.5 13.5 0 0 1-12.7 20.3l6-10z" fill="#ffcd3a" />
      <circle cx="14" cy="14" r="6.5" fill="#fff" />
      <circle cx="14" cy="14" r="5" fill="#3f82d4" />
    </svg>
  ),
  allegro: <Logo />,
  design: (
    <svg viewBox="0 0 28 30" className="h-[30px] w-7" aria-hidden="true">
      <path d="M.5.5h27v29H.5z" fill="#c8c8c8" stroke="#000" />
      <path d="M5 5h10v12H5z" fill="#0ff" stroke="#000" />
      <path d="M7 2v3M10 2v3M13 2v3M7 17v3M10 17v3M2 7h3M2 10h3M2 13h3M15 8h3" stroke="#000" />
      <path d="M20 3h6v9M21 8h5" fill="none" stroke="#e00" />
      <path d="M22 17h4v10" fill="none" stroke="#00c" />
      <path d="M3 23h8v6M3 26h5" fill="none" stroke="#fff" />
      <path d="M12 14l9 7-3 1 2 5-3 1-2-5-3 2z" fill="#000" />
    </svg>
  ),
  pdf: (
    <svg viewBox="0 0 28 32" className="h-8 w-7" aria-hidden="true">
      <path d="M9 1h13l6 7v23H9z" fill="#fafafa" stroke="#bbb" />
      <path d="M22 1v7h6" fill="#ddd" stroke="#bbb" />
      <path d="M11 26c6-4 7-8 6-13-1 6 4 10 9 10-6-1-12 1-15 3z" fill="none" stroke="#b01c1c" strokeWidth="1.8" />
      <path d="M0 1h20v9H0z" fill="#a81414" />
      <text x="2" y="8.5" fontSize="8" fontWeight="700" fill="#fff" fontFamily="Liberation Sans">
        PDF
      </text>
    </svg>
  ),
  excel: (
    <svg viewBox="0 0 28 32" className="h-8 w-7" aria-hidden="true">
      <path d="M5 2h16l7 7v22H5z" fill="#eef4fd" stroke="#8fa8d4" />
      <path d="M14 8h11v9H14zM8 20h17v8H8zM14 12.5h11M19 8v9M12 20v8M16 20v8M21 20v8" fill="none" stroke="#5a7dc0" />
      <path d="M.5 3h13v13H.5z" fill="#f2faf0" stroke="#3f8a34" />
      <path d="M3 5l8 9M11 5l-8 9" stroke="#3f9a34" strokeWidth="2.5" />
    </svg>
  ),
  notepad: (
    <svg viewBox="0 0 28 32" className="h-8 w-7" aria-hidden="true">
      <path d="M10 4l18 1-4 24-6 2z" fill="#b8924a" />
      <path d="M9 3l17 1-6 26-19-5z" fill="#9ed4dd" stroke="#e6f4f6" />
      <path d="M1 24l19 6 3-12z" fill="#d6eff2" />
      <path d="M9 3l17 1" stroke="#ddd" strokeWidth="2" strokeDasharray="2 1" />
    </svg>
  ),
};

const DARK = "bg-[linear-gradient(#8a9095,#5b646a_22%,#424d54_50%,#2c383f_52%,#36434b)]";
const LIGHT = "bg-[linear-gradient(#c3c6c8,#9a9ea1_30%,#8a8f93_50%,#777d81_52%,#8f9599)]";
const TEAL = "bg-[linear-gradient(#9db7c0,#5f7f8c_25%,#4f7686_50%,#44707f_52%,#5f9bb0)]";
const SLATE = "bg-[linear-gradient(#aab3b7,#5d666d_25%,#3f4c56_50%,#33414a_52%,#42555f)]";
const SLATE_TEAL =
  "bg-[linear-gradient(to_right,#3f4c5600_50%,#5f9bb0aa),linear-gradient(#aab3b7,#5d666d_25%,#3f4c56_50%,#33414a_52%,#42555f)]";

const TASKS = [
  [{ icon: "convert", label: "Convert", bg: DARK }],
  [
    { icon: "folder", label: "DFA-TEST", bg: DARK },
    { icon: "folder", label: "750-1210-REV-...", bg: DARK },
  ],
  [{ icon: "chrome", label: "cmug.pdf - Go...", bg: DARK }],
  [
    { icon: "allegro", label: "(Package) Alle...", bg: DARK },
    { icon: "allegro", label: "Allegro PCB D...", bg: DARK },
    { icon: "allegro", label: "Allegro PCB D...", bg: LIGHT },
  ],
  [{ icon: "design", label: "Allegro Design...", bg: DARK }],
  [{ icon: "pdf", label: "FlowCAD_AN_...", bg: DARK }],
  [
    { icon: "excel", label: "VINOTH_VTita...", bg: SLATE_TEAL },
    { icon: "excel", label: "Changes_750-...", bg: TEAL },
  ],
  [{ icon: "notepad", label: "Untitled - Not...", bg: SLATE }],
];

function Taskbar() {
  return (
    <div className="flex h-10 items-stretch border-t border-[#0a1216] bg-[linear-gradient(to_right,#0b1418_0%,#101c22_70%,#3f7d93_88%,#1b2b34_93%,#3f7d93_94%,#16222b_96%,#101a22_100%)] font-['Roboto',sans-serif] text-xs text-white">
      <button type="button" aria-label="Start" className="flex w-[60px] shrink-0 items-center pl-2">
        <svg viewBox="0 0 38 38" className="size-[38px]" aria-hidden="true">
          <circle cx="19" cy="19" r="18" fill="url(#orb)" stroke="#5f8ba6" />
          <path d="M10 12c3-2 6-2 8 0l-2 7c-2-2-5-2-8 0z" fill="#f0652c" />
          <path d="M19.5 12.5c3 1.5 6 1.5 9 0l-2 7c-3 1.5-6 1.5-9 0z" fill="#8fce3c" />
          <path d="M7.7 20.5c3-2 6-2 8 0l-2 7c-2-2-5-2-8 0z" fill="#4aa6e8" />
          <path d="M17 21c3 1.5 6 1.5 9 0l-2 7c-3 1.5-6 1.5-9 0z" fill="#fccf3a" />
        </svg>
      </button>
      <div className="flex gap-[3px]">
        {TASKS.map((group) => (
          <div key={group[0].label} className="flex shrink-0 overflow-hidden rounded-[3px] border border-[#7e888e]">
            {group.map(({ icon, label, bg }, i) => (
              <button
                key={i}
                type="button"
                className={`flex shrink-0 items-center overflow-hidden pl-[9px] text-left whitespace-nowrap ${bg} ${
                  group.length === 1 ? "w-[139px]" : "w-[140px]"
                }`}
              >
                <span className="mr-[6px] flex w-7 shrink-0 justify-center">{TASK_ICONS[icon]}</span>
                {label}
              </button>
            ))}
          </div>
        ))}
      </div>
      <div className="ml-auto flex items-center">
        <svg viewBox="0 0 8 5" className="mr-5 h-[5px] w-2 shrink-0" aria-hidden="true">
          <path d="M4 0l4 5H0z" fill="#e6eaed" />
        </svg>
        <svg viewBox="0 0 16 16" className="mr-6 size-4 shrink-0" aria-hidden="true">
          <path d="M6 4h9v8H6zM8 15h5M10.5 12v3M2 1v3M4 1v3M1 4h4v3H3v7h4" fill="none" stroke="#fff" strokeWidth="1.5" />
        </svg>
        <div className="mr-3 text-center leading-[17px] whitespace-nowrap">
          <p>12:09 PM</p>
          <p>2015-06-03</p>
        </div>
        <button type="button" aria-label="Show desktop" className="h-full w-[14px] border-l border-[#6d7a82] bg-linear-to-b from-[#4a5962] to-[#1b262d]" />
      </div>
    </div>
  );
}

export default function App() {
  return (
    <main className="relative overflow-hidden bg-[#f0f0f0] font-['Open_Sans',sans-serif]">
      <svg className="absolute size-0" aria-hidden="true">
        <defs>
          <linearGradient id="steel" x1="0" y1="0" x2="0" y2="1">
            <stop offset="0" stopColor="#c3ceec" />
            <stop offset="1" stopColor="#8090c9" />
          </linearGradient>
          <linearGradient id="gold" x1="0" y1="0" x2="1" y2="1">
            <stop offset="0" stopColor="#fff0c0" />
            <stop offset="1" stopColor="#f0b860" />
          </linearGradient>
          <radialGradient id="orb" cx=".5" cy=".8" r=".8">
            <stop offset="0" stopColor="#3fc0ee" />
            <stop offset=".5" stopColor="#1c5f94" />
            <stop offset="1" stopColor="#7fa0b4" />
          </radialGradient>
        </defs>
      </svg>
      <TitleBar />
      <MenuBar />
      <div className="h-[3px] bg-[#b90c10]" />
      <TopToolbar />
      <div className="flex">
        <SideToolbars />
        <div className="min-w-0 flex-1">
          <div className="border-2 border-t-[#8a8a8a] border-r-white border-b-white border-l-[#8a8a8a]">
            <Board />
          </div>
          <CommandPanel />
        </div>
        <DockTabs />
      </div>
      <StatusBar />
      <Taskbar />
      <PlacementDialog />
    </main>
  );
}
